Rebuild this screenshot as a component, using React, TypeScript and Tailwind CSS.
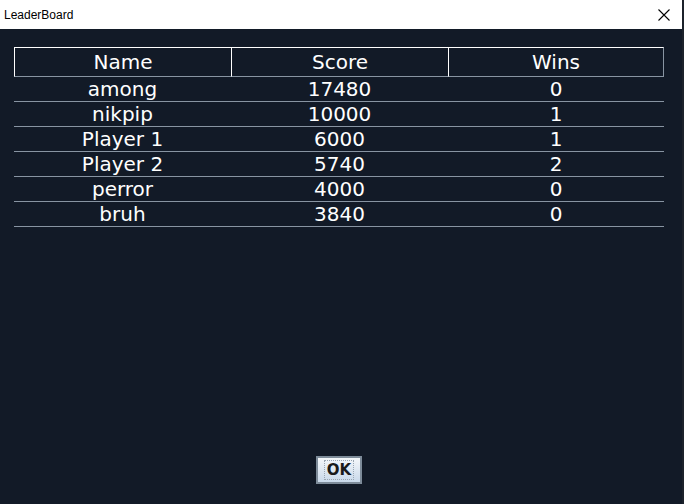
const rows = [
  { name: 'among', score: 17480, wins: 0 },
  { name: 'nikpip', score: 10000, wins: 1 },
  { name: 'Player 1', score: 6000, wins: 1 },
  { name: 'Player 2', score: 5740, wins: 2 },
  { name: 'perror', score: 4000, wins: 0 },
  { name: 'bruh', score: 3840, wins: 0 },
];

export default function App() {
  return (
    <div className="w-[684px] h-[504px] bg-[#121a27] flex flex-col overflow-hidden border-r-2 border-r-[#1c222b]">
      {/* title bar */}
      <div className="h-[29px] w-[682px] bg-white flex items-center justify-between pl-[4px] pr-[12px]">
        <span className="text-[12px] text-black" style={{ fontFamily: '"Liberation Sans", Arial, sans-serif' }}>
          LeaderBoard
        </span>
        <svg width="12" height="12" viewBox="0 0 12 12" className="text-black">
          <path d="M0.5 0.5 L11.5 11.5 M11.5 0.5 L0.5 11.5" stroke="currentColor" strokeWidth="1.1" fill="none" />
        </svg>
      </div>

      <div
        className="flex-1 flex flex-col pt-[18px] px-[14px] pb-[20px] text-white"
        style={{ fontFamily: '"DejaVu Sans", Verdana, sans-serif' }}
      >
        <div className="w-[650px] grid grid-cols-[217px_217px_216px]">
          {['Name', 'Score', 'Wins'].map((h, i) => (
            <div
              key={h}
              className={
                'h-[30px] flex items-center justify-center text-[20px] border-t border-l border-b border-t-white border-l-white border-b-[#8894a2] ' +
                (i === 2 ? 'border-r border-r-[#8894a2]' : '')
              }
            >
              {h}
            </div>
          ))}
          {rows.map((r) => (
            <div key={r.name} className="contents">
              <div className="h-[25px] flex items-center justify-center text-[20px] border-b border-[#8894a2]">{r.name}</div>
              <div className="h-[25px] flex items-center justify-center text-[20px] border-b border-[#8894a2]">{r.score}</div>
              <div className="h-[25px] flex items-center justify-center text-[20px] border-b border-[#8894a2]">{r.wins}</div>
            </div>
          ))}
        </div>

        <div className="flex-1" />

        <div className="flex justify-center pr-[4px]">
          <button className="w-[46px] h-[28px] border-2 border-[#7d8b99] bg-gradient-to-b from-[#f4f7fa] to-[#c9d9ea] flex items-center justify-center">
            <span className="border border-dotted border-[#9aa6b2] px-[2px] leading-[18px] text-[15px] font-bold text-[#1a1a1a]">
              OK
            </span>
          </button>
        </div>
      </div>
    </div>
  );
}
